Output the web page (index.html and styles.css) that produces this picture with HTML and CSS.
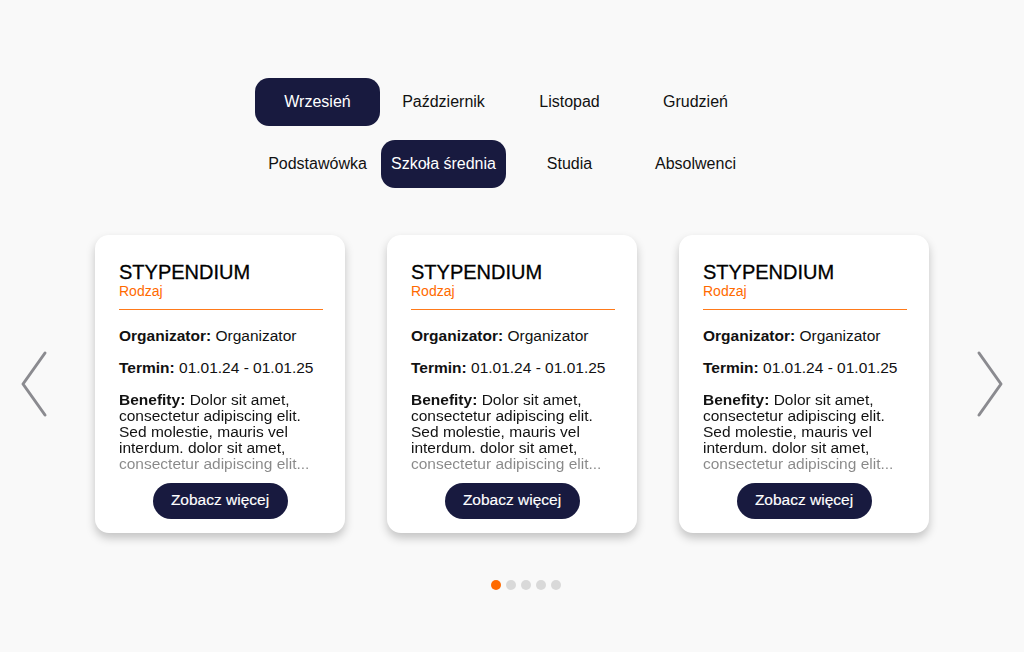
FILE: index.html
```html
<!DOCTYPE html>
<html lang="pl">
<head>
<meta charset="utf-8">
<title>Stypendia</title>
<link rel="stylesheet" href="styles.css">
</head>
<body>
<main class="page">
  <nav class="filters">
    <div class="tab-row">
      <button class="tab active">Wrzesień</button>
      <button class="tab">Październik</button>
      <button class="tab">Listopad</button>
      <button class="tab">Grudzień</button>
    </div>
    <div class="tab-row">
      <button class="tab">Podstawówka</button>
      <button class="tab active">Szkoła średnia</button>
      <button class="tab">Studia</button>
      <button class="tab">Absolwenci</button>
    </div>
  </nav>

  <section class="carousel">
    <button class="arrow" aria-label="Poprzednie">
      <svg width="28" height="68" viewBox="0 0 28 68"><polyline points="25,3 3,34 25,65" fill="none" stroke="#8b8b90" stroke-width="3" stroke-linecap="round" stroke-linejoin="round"/></svg>
    </button>
    <div class="cards">
      <article class="card">
        <h2 class="card-title">STYPENDIUM</h2>
        <div class="card-kind">Rodzaj</div>
        <hr class="card-rule">
        <p class="row"><b>Organizator:</b> Organizator</p>
        <p class="row"><b>Termin:</b> 01.01.24 - 01.01.25</p>
        <p class="row benefits"><b>Benefity:</b> Dolor sit amet, consectetur adipiscing elit. Sed molestie, mauris vel interdum. dolor sit amet, consectetur adipiscing elit...</p>
        <button class="more">Zobacz więcej</button>
      </article>
      <article class="card">
        <h2 class="card-title">STYPENDIUM</h2>
        <div class="card-kind">Rodzaj</div>
        <hr class="card-rule">
        <p class="row"><b>Organizator:</b> Organizator</p>
        <p class="row"><b>Termin:</b> 01.01.24 - 01.01.25</p>
        <p class="row benefits"><b>Benefity:</b> Dolor sit amet, consectetur adipiscing elit. Sed molestie, mauris vel interdum. dolor sit amet, consectetur adipiscing elit...</p>
        <button class="more">Zobacz więcej</button>
      </article>
      <article class="card">
        <h2 class="card-title">STYPENDIUM</h2>
        <div class="card-kind">Rodzaj</div>
        <hr class="card-rule">
        <p class="row"><b>Organizator:</b> Organizator</p>
        <p class="row"><b>Termin:</b> 01.01.24 - 01.01.25</p>
        <p class="row benefits"><b>Benefity:</b> Dolor sit amet, consectetur adipiscing elit. Sed molestie, mauris vel interdum. dolor sit amet, consectetur adipiscing elit...</p>
        <button class="more">Zobacz więcej</button>
      </article>
    </div>
    <button class="arrow" aria-label="Następne">
      <svg width="28" height="68" viewBox="0 0 28 68"><polyline points="3,3 25,34 3,65" fill="none" stroke="#8b8b90" stroke-width="3" stroke-linecap="round" stroke-linejoin="round"/></svg>
    </button>
  </section>

  <div class="dots">
    <span class="dot active"></span>
    <span class="dot"></span>
    <span class="dot"></span>
    <span class="dot"></span>
    <span class="dot"></span>
  </div>
</main>
</body>
</html>
```

FILE: styles.css
```css
* { box-sizing: border-box; }

html, body {
  margin: 0;
  padding: 0;
  background: #f9f9f9;
  font-family: "Liberation Sans", Arial, sans-serif;
  color: #111;
}

.page {
  width: 1024px;
  height: 652px;
  padding-top: 78px;
  overflow: hidden;
}

.filters {
  display: flex;
  flex-direction: column;
  align-items: center;
  gap: 14px;
  padding-right: 11px;
}

.tab-row {
  display: grid;
  grid-template-columns: repeat(4, 125px);
  column-gap: 1px;
}

.tab {
  height: 48px;
  border: 0;
  border-radius: 14px;
  background: transparent;
  font-family: inherit;
  font-size: 16px;
  color: #111;
  padding: 0;
  cursor: pointer;
}

.tab.active {
  background: #181a3f;
  color: #fff;
}

.carousel {
  margin-top: 47px;
  display: flex;
  align-items: center;
  justify-content: center;
  gap: 47px;
}

.arrow {
  width: 28px;
  height: 68px;
  padding: 0;
  border: 0;
  background: transparent;
  display: flex;
  cursor: pointer;
}

.cards {
  display: flex;
  gap: 42px;
}

.card {
  width: 250px;
  height: 298px;
  background: #fff;
  border-radius: 14px;
  box-shadow: 0 5px 10px rgba(0, 0, 0, 0.22);
  padding: 27px 22px 0 24px;
  display: flex;
  flex-direction: column;
}

.card-title {
  margin: 0;
  font-size: 20px;
  font-weight: 400;
  line-height: 20px;
  color: #000;
  -webkit-text-stroke: 0.3px #000;
}

.card-kind {
  color: #ff6a00;
  font-size: 14px;
  line-height: 18px;
}

.card-rule {
  margin: 9px 0 0;
  border: 0;
  height: 1px;
  background: #ff7a1a;
}

.row {
  margin: 18px 0 0;
  font-size: 15.5px;
  line-height: 16px;
}

.row + .row {
  margin-top: 16px;
}

.row b {
  font-weight: 700;
}

.benefits {
  -webkit-mask-image: linear-gradient(to bottom, #000 64px, rgba(0, 0, 0, 0.5) 64px);
  mask-image: linear-gradient(to bottom, #000 64px, rgba(0, 0, 0, 0.5) 64px);
}

.more {
  align-self: center;
  margin: 11px 0 0 -2px;
  width: 135px;
  height: 36px;
  padding: 0 0 2px;
  border: 0;
  border-radius: 18px;
  background: #181a3f;
  color: #fff;
  font-family: inherit;
  font-size: 15.5px;
  -webkit-text-stroke: 0.15px #fff;
  cursor: pointer;
}

.dots {
  margin-top: 47px;
  display: flex;
  justify-content: center;
  gap: 5px;
  padding-left: 28px;
}

.dot {
  width: 10px;
  height: 10px;
  border-radius: 50%;
  background: #d9d9d9;
}

.dot.active {
  background: #ff6a00;
}
```
